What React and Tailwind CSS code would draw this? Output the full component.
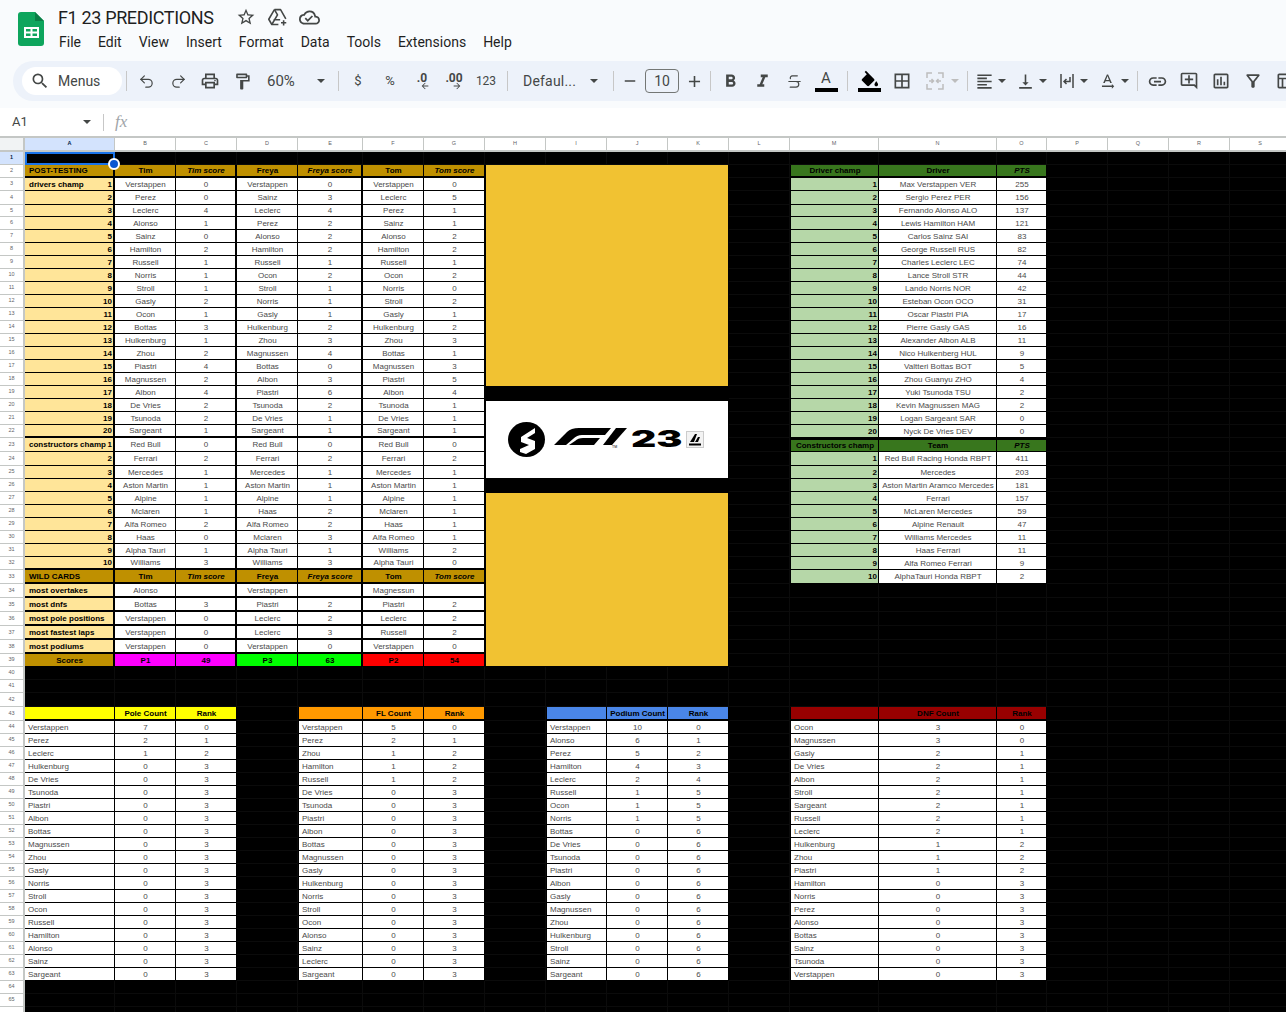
import {
  MdStarBorder, MdOutlineCloudDone, MdSearch, MdOutlinePrint,
  MdOutlineFormatPaint, MdAdd, MdRemove, MdFormatBold, MdFormatItalic, MdBorderAll,
  MdFormatAlignLeft, MdVerticalAlignBottom, MdTextRotationNone, MdLink, MdOutlineAddComment,
  MdOutlineInsertChart, MdOutlineFilterAlt, MdOutlineTableChart, MdArrowBack, MdArrowForward,
} from 'react-icons/md';
import { Undo2, Redo2, Strikethrough } from 'lucide-react';

const COLS = 'ABCDEFGHIJKLMNOPQRS'.split('');

const tim = [['Verstappen', 0], ['Perez', 0], ['Leclerc', 4], ['Alonso', 1], ['Sainz', 0], ['Hamilton', 2], ['Russell', 1], ['Norris', 1], ['Stroll', 1], ['Gasly', 2], ['Ocon', 1], ['Bottas', 3], ['Hulkenburg', 1], ['Zhou', 2], ['Piastri', 4], ['Magnussen', 2], ['Albon', 4], ['De Vries', 2], ['Tsunoda', 2], ['Sargeant', 1],
  ['Red Bull', 0], ['Ferrari', 2], ['Mercedes', 1], ['Aston Martin', 1], ['Alpine', 1], ['Mclaren', 1], ['Alfa Romeo', 2], ['Haas', 0], ['Alpha Tauri', 1], ['Williams', 3]];
const freya = [['Verstappen', 0], ['Sainz', 3], ['Leclerc', 4], ['Perez', 2], ['Alonso', 2], ['Hamilton', 2], ['Russell', 1], ['Ocon', 2], ['Stroll', 1], ['Norris', 1], ['Gasly', 1], ['Hulkenburg', 2], ['Zhou', 3], ['Magnussen', 4], ['Bottas', 0], ['Albon', 3], ['Piastri', 6], ['Tsunoda', 2], ['De Vries', 1], ['Sargeant', 1],
  ['Red Bull', 0], ['Ferrari', 2], ['Mercedes', 1], ['Aston Martin', 1], ['Alpine', 1], ['Haas', 2], ['Alfa Romeo', 2], ['Mclaren', 3], ['Alpha Tauri', 1], ['Williams', 3]];
const tom = [['Verstappen', 0], ['Leclerc', 5], ['Perez', 1], ['Sainz', 1], ['Alonso', 2], ['Hamilton', 2], ['Russell', 1], ['Ocon', 2], ['Norris', 0], ['Stroll', 2], ['Gasly', 1], ['Hulkenburg', 2], ['Zhou', 3], ['Bottas', 1], ['Magnussen', 3], ['Piastri', 5], ['Albon', 4], ['Tsunoda', 1], ['De Vries', 1], ['Sargeant', 1],
  ['Red Bull', 0], ['Ferrari', 2], ['Mercedes', 1], ['Aston Martin', 1], ['Alpine', 1], ['Mclaren', 1], ['Haas', 1], ['Alfa Romeo', 1], ['Williams', 2], ['Alpha Tauri', 0]];

const wild = [
  ['most overtakes', 'Alonso', '', 'Verstappen', '', 'Magnessun', ''],
  ['most dnfs', 'Bottas', 3, 'Piastri', 2, 'Piastri', 2],
  ['most pole positions', 'Verstappen', 0, 'Leclerc', 2, 'Leclerc', 2],
  ['most fastest laps', 'Verstappen', 0, 'Leclerc', 3, 'Russell', 2],
  ['most podiums', 'Verstappen', 0, 'Verstappen', 0, 'Verstappen', 0],
];

const drivers = [['Max Verstappen VER', 255], ['Sergio Perez PER', 156], ['Fernando Alonso ALO', 137], ['Lewis Hamilton HAM', 121], ['Carlos Sainz SAI', 83], ['George Russell RUS', 82], ['Charles Leclerc LEC', 74], ['Lance Stroll STR', 44], ['Lando Norris NOR', 42], ['Esteban Ocon OCO', 31], ['Oscar Piastri PIA', 17], ['Pierre Gasly GAS', 16], ['Alexander Albon ALB', 11], ['Nico Hulkenberg HUL', 9], ['Valtteri Bottas BOT', 5], ['Zhou Guanyu ZHO', 4], ['Yuki Tsunoda TSU', 2], ['Kevin Magnussen MAG', 2], ['Logan Sargeant SAR', 0], ['Nyck De Vries DEV', 0]];
const teams = [['Red Bull Racing Honda RBPT', 411], ['Mercedes', 203], ['Aston Martin Aramco Mercedes', 181], ['Ferrari', 157], ['McLaren Mercedes', 59], ['Alpine Renault', 47], ['Williams Mercedes', 11], ['Haas Ferrari', 11], ['Alfa Romeo Ferrari', 9], ['AlphaTauri Honda RBPT', 2]];

const pole = 'Verstappen Perez Leclerc Hulkenburg De_Vries Tsunoda Piastri Albon Bottas Magnussen Zhou Gasly Norris Stroll Ocon Russell Hamilton Alonso Sainz Sargeant'.split(' ');
const fl = 'Verstappen Perez Zhou Hamilton Russell De_Vries Tsunoda Piastri Albon Bottas Magnussen Gasly Hulkenburg Norris Stroll Ocon Alonso Sainz Leclerc Sargeant'.split(' ');
const podium = 'Verstappen Alonso Perez Hamilton Leclerc Russell Ocon Norris Bottas De_Vries Tsunoda Piastri Albon Gasly Magnussen Zhou Hulkenburg Stroll Sainz Sargeant'.split(' ');
const dnf = 'Ocon Magnussen Gasly De_Vries Albon Stroll Sargeant Russell Leclerc Hulkenburg Zhou Piastri Hamilton Norris Perez Alonso Bottas Sainz Tsunoda Verstappen'.split(' ');

const poleN = [[7, 0], [2, 1], [1, 2]];
const flN = [[5, 0], [2, 1], [1, 2], [1, 2], [1, 2]];
const podiumN = [[10, 0], [6, 1], [5, 2], [4, 3], [2, 4], [1, 5], [1, 5], [1, 5]];
const dnfN = [[3, 0], [3, 0], [2, 1], [2, 1], [2, 1], [2, 1], [2, 1], [2, 1], [2, 1], [1, 2], [1, 2], [1, 2]];

const HEAD = 'bg-[#bf9000] text-black font-bold justify-center pl-px';
const HEADI = 'bg-[#bf9000] text-black font-bold italic justify-center pl-px';
const LABEL = 'bg-[#ffe599] text-black font-bold justify-between pl-[4px] pr-px';
const VAL = 'bg-white text-[#4a4a4a] justify-center pl-px';
const NAME = 'bg-white text-[#4a4a4a] pl-[3px]';
const GREEN = 'bg-[#38761d] text-black font-bold justify-center pl-px';
const GREENI = 'bg-[#38761d] text-black font-bold italic justify-center pl-px';
const NUM = 'bg-[#b6d7a8] text-black font-bold justify-end pr-px';

// puts every filled cell of the sheet in one list: row, col (A = 1), text, classes
const buildCells = () => {
  const cells = [];
  const put = (r, c, text, cls, extra = '') => cells.push({ r, c, text, cls: `${cls} ${extra}` });
  const thick = (c) => (c === 1 || c === 3 || c === 5 ? 'border-r-2' : 'border-r');
  const bottom = (r) => ([2, 22, 32, 33, 34, 35, 36, 37, 38].includes(r) ? 'border-b-2' : 'border-b');
  const line = (r, c) => `${thick(c)} ${bottom(r)} border-black`;

  put(2, 1, 'POST-TESTING', 'bg-[#bf9000] text-black font-bold pl-[4px]', line(2, 1));
  ['Tim', 'Tim score', 'Freya', 'Freya score', 'Tom', 'Tom score'].forEach((t, i) => put(2, i + 2, t, i % 2 ? HEADI : HEAD, line(2, i + 2)));

  for (let i = 0; i < 30; i++) {
    const r = i + 3;
    const n = i < 20 ? i + 1 : i - 19;
    const title = i === 0 ? 'drivers champ' : i === 20 ? 'constructors champ' : '';
    put(r, 1, <><span>{title}</span><span>{n}</span></>, LABEL, line(r, 1));
    [tim[i], freya[i], tom[i]].forEach((p, k) => {
      put(r, 2 + k * 2, p[0], VAL, line(r, 2 + k * 2));
      put(r, 3 + k * 2, p[1], VAL, line(r, 3 + k * 2));
    });
  }

  put(33, 1, 'WILD CARDS', 'bg-[#bf9000] text-black font-bold pl-[4px]', line(33, 1));
  ['Tim', 'Tim score', 'Freya', 'Freya score', 'Tom', 'Tom score'].forEach((t, i) => put(33, i + 2, t, i % 2 ? HEADI : HEAD, line(33, i + 2)));
  wild.forEach((w, i) => {
    const r = 34 + i;
    put(r, 1, w[0], LABEL, line(r, 1));
    w.slice(1).forEach((v, k) => put(r, k + 2, v, VAL, line(r, k + 2)));
  });
  put(39, 1, 'Scores', HEAD, line(39, 1));
  [['P1', 'bg-[#ff00ff]'], ['49', 'bg-[#ff00ff]'], ['P3', 'bg-[#00ff00]'], ['63', 'bg-[#00ff00]'], ['P2', 'bg-[#ff0000]'], ['54', 'bg-[#ff0000]']]
    .forEach(([t, bg], i) => put(39, i + 2, t, `${bg} text-black font-bold justify-center pl-px`, line(39, i + 2)));

  // right hand championship tables
  const side = 'border-r border-b border-black';
  const sideL = 'border-l border-r border-b border-black';
  put(2, 13, 'Driver champ', GREEN, `${sideL} border-b-2`);
  put(2, 14, 'Driver', GREEN, `${side} border-b-2`);
  put(2, 15, 'PTS', GREENI, `${side} border-b-2`);
  drivers.forEach((d, i) => {
    put(i + 3, 13, i + 1, NUM, sideL);
    put(i + 3, 14, d[0], VAL, side);
    put(i + 3, 15, d[1], VAL, side);
  });
  put(23, 13, 'Constructors champ', GREEN, `${sideL} border-t-2`);
  put(23, 14, 'Team', GREEN, `${side} border-t-2`);
  put(23, 15, 'PTS', GREENI, `${side} border-t-2`);
  teams.forEach((t, i) => {
    put(i + 24, 13, i + 1, NUM, sideL);
    put(i + 24, 14, t[0], VAL, side);
    put(i + 24, 15, t[1], VAL, side);
  });

  // bottom count tables
  const table = (c, bg, title, names, counts, tailRank) => {
    put(43, c, '', bg, `${c === 1 ? '' : 'border-l'} border-r border-b-2 border-black`);
    put(43, c + 1, title, `${bg} text-black font-bold justify-center pl-px`, 'border-r border-b-2 border-black');
    put(43, c + 2, 'Rank', `${bg} text-black font-bold justify-center pl-px`, 'border-r border-b-2 border-black');
    names.forEach((n, i) => {
      const pair = counts[i] || [0, tailRank];
      put(44 + i, c, n.replace('_', ' '), NAME, `${c === 1 ? '' : 'border-l'} border-r border-b border-black`);
      put(44 + i, c + 1, pair[0], VAL, 'border-r border-b border-black');
      put(44 + i, c + 2, pair[1], VAL, 'border-r border-b border-black');
    });
  };
  table(1, 'bg-[#ffff00]', 'Pole Count', pole, poleN, 3);
  table(5, 'bg-[#ff9900]', 'FL Count', fl, flN, 3);
  table(9, 'bg-[#4a86e8]', 'Podium Count', podium, podiumN, 6);
  table(13, 'bg-[#980000]', 'DNF Count', dnf, dnfN, 3);
  return cells;
};

const GreenLogo = () => (
  <svg width="26" height="34" viewBox="0 0 26 34">
    <path d="M3 0h14l9 9v22a3 3 0 0 1-3 3H3a3 3 0 0 1-3-3V3a3 3 0 0 1 3-3z" fill="#0ea55d" />
    <path d="M17 0l9 9h-9z" fill="#0a7d46" />
    <path d="M6 15h15v11H6z" fill="#fff" />
    <path d="M8 17h4.500v2.500H8zM14.500 17H19v2.500h-4.500zM8 21.500h4.500V24H8zM14.500 21.500H19V24h-4.500z" fill="#0ea55d" />
  </svg>
);

const DriveAdd = () => (
  <svg width="21" height="21" viewBox="0 0 24 24" fill="none" stroke="#444746" strokeWidth="1.800" strokeLinejoin="round">
    <path d="M8.500 3h7l6 10.500M8.500 3L2 14l3.500 6H13" />
    <path d="M8.500 3L12 9l-6.500 11M7.500 14.500H15" />
    <path d="M19 15v6M16 18h6" />
  </svg>
);

const Tri = ({ className = 'border-t-[#444746]' }) => (
  <div className={`w-0 h-0 border-x-[4px] border-t-[4px] border-x-transparent ${className}`} />
);

const Sep = ({ mx = 'mx-[3px]' }) => <div className={`w-px h-[20px] bg-[#c7c7c7] shrink-0 ${mx}`} />;

const Btn = ({ children, w = 'w-[32px]' }) => (
  <div className={`${w} h-[28px] shrink-0 flex items-center justify-center text-[#444746]`}>{children}</div>
);

const Toolbar = () => (
  <div className="ml-[13px] h-[40px] w-[1300px] shrink-0 bg-[#edf2fa] rounded-l-[20px] flex items-center pl-[9px] text-[14px] text-[#444746]">
    <div className="w-[100px] h-[28px] bg-white rounded-full flex items-center pl-[8px] gap-[8px] shrink-0">
      <MdSearch size={20} />
      <span>Menus</span>
    </div>
    <Sep mx="ml-[4px] mr-[3px]" />
    <Btn><Undo2 size={17} strokeWidth={1.7} /></Btn>
    <Btn><Redo2 size={17} strokeWidth={1.7} /></Btn>
    <Btn><MdOutlinePrint size={20} /></Btn>
    <Btn><MdOutlineFormatPaint size={19} /></Btn>
    <div className="w-[77px] shrink-0 flex items-center justify-between pl-[9px] pr-[10px] text-[15px]">
      <span>60%</span><Tri />
    </div>
    <Sep mx="ml-[3px] mr-[3px]" />
    <Btn><span className="text-[13px]">$</span></Btn>
    <Btn><span className="text-[13px]">%</span></Btn>
    <Btn>
      <div className="flex flex-col items-center leading-none -space-y-[3px]">
        <span className="text-[12px] font-bold">.0</span>
        <MdArrowBack size={10} className="ml-[6px]" />
      </div>
    </Btn>
    <Btn>
      <div className="flex flex-col items-center leading-none -space-y-[3px]">
        <span className="text-[12px] font-bold">.00</span>
        <MdArrowForward size={10} className="ml-[6px]" />
      </div>
    </Btn>
    <Btn><span className="text-[12px]">123</span></Btn>
    <Sep mx="ml-[5px] mr-[3px]" />
    <div className="w-[98px] shrink-0 flex items-center justify-between pl-[12px] pr-[11px]">
      <span className="tracking-[0.2px]">Defaul...</span><Tri />
    </div>
    <Sep mx="ml-[4px] mr-0" />
    <Btn><MdRemove size={18} /></Btn>
    <div className="w-[34px] h-[24px] -ml-px shrink-0 border border-[#747775] rounded-[4px] flex items-center justify-center text-[14px]">10</div>
    <Btn w="w-[30px]"><MdAdd size={19} /></Btn>
    <Sep mx="ml-px mr-[3px]" />
    <Btn><MdFormatBold size={21} /></Btn>
    <Btn><MdFormatItalic size={21} /></Btn>
    <Btn><Strikethrough size={17} strokeWidth={1.7} /></Btn>
    <Btn>
      <div className="relative flex flex-col items-center">
        <span className="text-[15px] leading-[15px] mb-[2px]">A</span>
        <div className="w-[23px] h-[4px] bg-black" />
      </div>
    </Btn>
    <Sep mx="ml-[5px] mr-[5px]" />
    <Btn>
      <div className="flex flex-col items-center">
        <svg width="20" height="18" viewBox="0 0 22 18"><path fill="#000" d="M16.560 8.940L7.620 0 6.210 1.410l2.380 2.380-5.150 5.150c-.59.59-.59 1.540 0 2.120l5.500 5.500c.29.29.68.44 1.060.44s.77-.15 1.060-.44l5.500-5.500c.59-.58.59-1.530 0-2.120zM19 11.500s-2 2.170-2 3.500c0 1.100.9 2 2 2s2-.9 2-2c0-1.330-2-3.500-2-3.500z" /></svg>
        <div className="w-[23px] h-[4px] bg-black" />
      </div>
    </Btn>
    <Btn w="w-[33px]"><MdBorderAll size={20} /></Btn>
    <Btn w="w-[33px]">
      <svg width="18" height="18" viewBox="0 0 18 18" fill="none" stroke="#bdbdbd" strokeWidth="1.500">
        <path d="M1 6V1h5M12 1h5v5M17 12v5h-5M6 17H1v-5M3 9h4M5.500 7l2 2-2 2M15 9h-4M12.500 7l-2 2 2 2" />
      </svg>
    </Btn>
    <div className="w-[10px] shrink-0"><Tri className="border-t-[#bdbdbd]" /></div>
    <Sep mx="ml-[6px] mr-[2px]" />
    <Btn w="w-[41px]"><div className="flex items-center gap-[4px]"><MdFormatAlignLeft size={19} /><Tri /></div></Btn>
    <Btn w="w-[41px]"><div className="flex items-center gap-[4px]"><MdVerticalAlignBottom size={19} /><Tri /></div></Btn>
    <Btn w="w-[41px]">
      <div className="flex items-center gap-[4px]">
        <div className="w-[19px] flex justify-center">
          <svg width="14" height="16" viewBox="0 0 14 16" fill="none" stroke="#444746" strokeWidth="1.500">
            <path d="M1 1v14M13 1v14M10 4v4.500H4M6.500 6L4 8.500 6.500 11" />
          </svg>
        </div>
        <Tri />
      </div>
    </Btn>
    <Btn w="w-[41px]"><div className="flex items-center gap-[4px]"><MdTextRotationNone size={19} /><Tri /></div></Btn>
    <Sep mx="ml-[3px] mr-[3px]" />
    <Btn><MdLink size={21} /></Btn>
    <Btn><MdOutlineAddComment size={20} /></Btn>
    <Btn><MdOutlineInsertChart size={20} /></Btn>
    <Btn><MdOutlineFilterAlt size={20} /></Btn>
    <Btn><MdOutlineTableChart size={20} /></Btn>
  </div>
);

const GameLogo = () => (
  <div className="h-[77px] bg-white flex items-center pl-[22px]">
    <svg width="37" height="35" viewBox="0 0 37 35" className="shrink-0">
      <ellipse cx="18.500" cy="17.500" rx="18.500" ry="17.500" fill="#000" />
      <path d="M27 6L13 15v5l8 3-9 4v3l6 2 9-5v-8l-8-3 8-5z" fill="#fff" />
    </svg>
    <svg width="74" height="20" viewBox="0 0 74 20" className="ml-[9px] shrink-0 -mt-[3px]">
      <path d="M0 17L13 4Q17 0 25 0H57L51 7H28Q23 7 19 11L12 17z" fill="#000" />
      <path d="M15 17L21 13Q24 10 29 10H46L40 17z" fill="#000" />
      <path d="M49 17L62 0H73L58 17z" fill="#000" />
      <text x="58" y="20" fontSize="3.500" fontFamily="Liberation Sans, sans-serif" fill="#000">TM</text>
    </svg>
    <div className="w-[51px] ml-[3px] h-[17px] overflow-visible shrink-0 flex items-center">
      <span className="inline-block origin-left scale-x-[1.700] font-['Inter',sans-serif] font-black text-[23px] leading-none text-black">23</span>
    </div>
    <svg width="18" height="17" viewBox="0 0 18 17" className="ml-[4px] shrink-0">
      <rect x="0.500" y="0.500" width="17" height="16" fill="#f3f3f3" stroke="#ccc" />
      <path d="M4 11L9 3h2L8 11zM9 11l3-5h2l-2 5z" fill="#000" />
      <rect x="3" y="12.500" width="12" height="2" fill="#000" />
    </svg>
  </div>
);

const Sheet = () => {
  const cells = buildCells();
  const used = new Set(cells.map((x) => `${x.r},${x.c}`));
  const empties = [];
  for (let r = 1; r <= 66; r++) {
    for (let c = 1; c <= 19; c++) {
      const inBlock = c >= 8 && c <= 11 && r >= 2 && r <= 39;
      if (!used.has(`${r},${c}`) && !inBlock && !(r === 1 && c === 1)) empties.push({ r, c });
    }
  }

  return (
    <div className="flex-1 min-h-0 overflow-hidden bg-black">
      <div className="grid grid-cols-[25px_90px_61px_61px_61px_65px_61px_61px_61px_61px_61px_61px_61px_89px_118px_50px_61px_61px_61px_61px] grid-rows-[14px_13px_13px_13px_14px_12px_13px_repeat(16,13px)_14px_14px_13px_repeat(7,13px)_14px_14px_14px_14px_14px_14px_13px_13px_13px_14px_14px_13px_13px_repeat(21,13px)] w-max text-[8px] leading-none font-['Liberation_Sans',Arial,sans-serif]">
        {/* column headers */}
        <div className="bg-[#f1f3f4] border-r-[2px] border-b-[2px] border-[#c4c7c5]" style={{ gridRow: 1, gridColumn: 1 }} />
        {COLS.map((l, i) => (
          <div
            key={l}
            className={`flex items-center justify-center text-[5.500px] border-r border-b-[2px] border-[#c4c7c5] ${i === 0 ? 'bg-[#d3e3fd] font-bold text-[#041e49]' : 'bg-white text-[#5f6368]'}`}
            style={{ gridRow: 1, gridColumn: i + 2 }}
          >
            {l}
          </div>
        ))}
        {/* row headers, the last one only peeks in at the window's edge */}
        {Array.from({ length: 66 }, (_, i) => (
          <div
            key={i}
            className={`flex items-center justify-center text-[5.500px] border-r-[2px] border-b border-[#c4c7c5] ${i === 0 ? 'bg-[#d3e3fd] font-bold text-[#041e49]' : 'bg-white text-[#5f6368]'}`}
            style={{ gridRow: i + 2, gridColumn: 1 }}
          >
            {i < 65 ? i + 1 : ''}
          </div>
        ))}
        {/* black filler cells with their faint grid lines */}
        {empties.map((e) => (
          <div key={`${e.r}-${e.c}`} className="bg-black border-r border-b border-[#0b0b0b]" style={{ gridRow: e.r + 1, gridColumn: e.c + 1 }} />
        ))}
        {/* selected A1 */}
        <div className="relative z-10 bg-black border-2 border-[#1a73e8]" style={{ gridRow: 2, gridColumn: 2 }}>
          <div className="absolute -right-[7px] -bottom-[7px] w-[12px] h-[12px] rounded-full bg-[#0b57d0] border-2 border-white" />
        </div>
        {/* merged block with the image in the middle */}
        <div className="bg-[#f1c232] border-l border-r border-black" style={{ gridRow: '3 / span 17', gridColumn: '9 / span 4' }} />
        <div className="border-l border-r border-black flex flex-col bg-[#f1c232] border-b" style={{ gridRow: '20 / span 21', gridColumn: '9 / span 4' }}>
          <div className="bg-black py-[15px] shrink-0">
            <GameLogo />
          </div>
        </div>
        {cells.map((x) => (
          <div
            key={`${x.r}-${x.c}`}
            className={`flex items-center whitespace-nowrap overflow-hidden pt-px ${x.cls}`}
            style={{ gridRow: x.r + 1, gridColumn: x.c + 1 }}
          >
            {x.text}
          </div>
        ))}
      </div>
    </div>
  );
};

const App = () => (
  <div className="h-[1012px] w-full overflow-hidden flex flex-col bg-white font-['Roboto',sans-serif]">
    <div className="h-[108px] bg-[#f9fbfd] shrink-0 overflow-hidden">
      <div className="h-[61px] flex">
        <div className="pl-[18px] pt-[12px] w-[58px] shrink-0"><GreenLogo /></div>
        <div className="pt-[6px]">
          <div className="flex items-center h-[22px] text-[#1f1f1f]">
            <span className="text-[18px] w-[178px] tracking-[-0.35px]">F1 23 PREDICTIONS</span>
            <div className="flex items-center gap-[11px] text-[#444746]">
              <MdStarBorder size={20} />
              <DriveAdd />
              <MdOutlineCloudDone size={21} />
            </div>
          </div>
          <div className="flex gap-[17px] mt-[4px] pl-px text-[14px] text-[#1f1f1f]">
            {['File', 'Edit', 'View', 'Insert', 'Format', 'Data', 'Tools', 'Extensions', 'Help'].map((m) => <span key={m}>{m}</span>)}
          </div>
        </div>
      </div>
      <Toolbar />
    </div>
    <div className="h-[30px] shrink-0 flex items-center border-b-2 border-[#c4c7c5] bg-white text-[#444746]">
      <span className="pl-[12px] w-[83px] text-[13px]">A1</span>
      <Tri />
      <div className="w-px h-[17px] bg-[#c7c7c7] ml-[12px]" />
      <span className="ml-[11px] font-['Liberation_Serif',serif] italic text-[17px] text-[#a0a4a8]">fx</span>
    </div>
    <Sheet />
  </div>
);

export default App;
